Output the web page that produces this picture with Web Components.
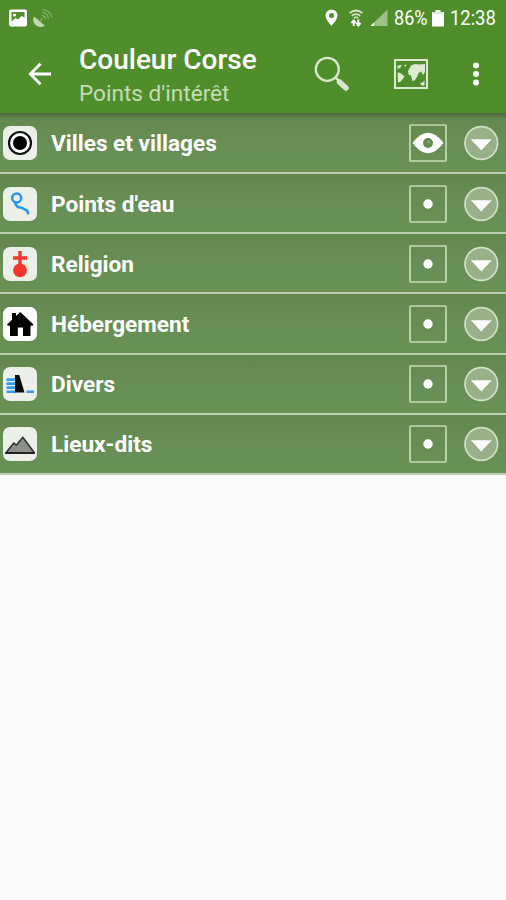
<!DOCTYPE html>
<html lang="fr">
<head>
<meta charset="utf-8">
<title>Couleur Corse</title>
<style>
    html, body {
        margin: 0;
        background: #fafafa;
    }
    body {
        width: 506px;
        height: 900px;
        overflow: hidden;
        font-family: Roboto, "Liberation Sans", sans-serif;
        color: #fff;
    }
</style>
</head>
<body>
<poi-screen>
    <status-bar slot="top" battery="86%" time="12:38"></status-bar>
    <app-bar slot="top">
        <span slot="title">Couleur Corse</span>
        <span slot="subtitle">Points d'intérêt</span>
    </app-bar>
    <poi-row icon="town" visible>Villes et villages</poi-row>
    <poi-row icon="water">Points d'eau</poi-row>
    <poi-row icon="religion">Religion</poi-row>
    <poi-row icon="house">Hébergement</poi-row>
    <poi-row icon="misc">Divers</poi-row>
    <poi-row icon="place">Lieux-dits</poi-row>
</poi-screen>

<script>
// 34x34 drawings, one for each category
const ICONS = {
    town: `
        <circle cx="17" cy="17" r="11" fill="#fff" stroke="#111" stroke-width="2.2"/>
        <circle cx="17" cy="17" r="7" fill="#000"/>`,
    water: `
        <circle cx="13.7" cy="11" r="4.5" fill="none" stroke="#2494ee" stroke-width="2.5"/>
        <path d="M12 15.5C12.500 18 14.500 20.500 17.500 20.500C20.500 20.500 20.500 22.500 23 23C24.800 23.500 25 24.800 25.300 27.300" fill="none" stroke="#2494ee" stroke-width="2.5"/>`,
    religion: `
        <path d="M15.3 4h3.4v5.2h5.3v3.5h-5.3v6h-3.4v-6h-5.3v-3.5h5.3z" fill="#f5382d"/>
        <circle cx="17" cy="23.3" r="6.9" fill="#f5382d"/>`,
    house: `
        <path d="M4 17.5L9 12.7V6h4v3l4.3-4L30.5 17.5L29.5 18.7H27.5V29H20V20.5H14.8V29H7V18.7H5z" fill="#000"/>`,
    misc: `
        <path d="M3.5 12.6h9M3.5 16.6h9M3.5 20.6h9M3.5 24.7h9M23.5 24.7h7.5" stroke="#329af0" stroke-width="2.6"/>
        <path d="M12 8h4.3L21.5 25.5H12z" fill="#0b0b08"/>`,
    place: `
        <path d="M3 25.8L10.8 16L13.4 18.2L19.8 10.3L31.3 25.8z" fill="#8d8f8b" stroke="#333" stroke-width="1.6" stroke-linejoin="round"/>
        <path d="M2.3 26h29.5" stroke="#222" stroke-width="1.8"/>`
};

class PoiScreen extends HTMLElement {
    constructor() {
        super();
        this.attachShadow({ mode: "open" });
        this.shadowRoot.innerHTML = `
            <style>
                :host {
                    display: flex;
                    flex-direction: column;
                    height: 900px;
                }
                header {
                    height: 113px;
                    flex: none;
                    background: #508e2c;
                }
                main {
                    display: flex;
                    flex-direction: column;
                }
                /* shadow of the header on the first row */
                main::before {
                    content: "";
                    height: 5px;
                    margin-bottom: -5px;
                    z-index: 1;
                    background: linear-gradient(rgba(50, 65, 45, .5), transparent);
                }
            </style>
            <header><slot name="top"></slot></header>
            <main><slot></slot></main>`;
    }
}

class StatusBar extends HTMLElement {
    constructor() {
        super();
        this.attachShadow({ mode: "open" });
        this.shadowRoot.innerHTML = `
            <style>
                :host {
                    display: flex;
                    align-items: center;
                    height: 36px;
                    box-sizing: border-box;
                    padding: 0 10px 1px 9px;
                    font-size: 21px;
                    line-height: 36px;
                }
                svg {
                    display: block;
                    flex: none;
                }
                .satellite { margin-left: 6px; }
                .pin { margin-left: auto; }
                .wifi { margin-left: 11px; }
                .signal { margin-left: 7px; }
                /* narrow digits */
                span {
                    display: block;
                    padding-top: 1px;
                    transform: scaleX(.875);
                    transform-origin: 0 50%;
                    white-space: nowrap;
                }
                .battery {
                    width: 34px;
                    margin-left: 6px;
                    transform: scaleX(.86);
                }
                .level { margin-left: 4px; }
                .time {
                    width: 46px;
                    margin-left: 6px;
                }
            </style>
            <svg width="18" height="18" viewBox="0 0 18 18">
                <rect y=".5" width="18" height="17" rx="2" fill="#fff"/>
                <path d="M2.5 3h13v5.5L12.5 7L9 10.5L6.5 9L2.5 12.5z" fill="#508e2c"/>
                <circle cx="5.5" cy="6" r="1.6" fill="#fff"/>
            </svg>
            <svg class="satellite" width="20" height="20" viewBox="0 0 20 20" fill="none" stroke="#a7c796" stroke-width="1.1">
                <path d="M1.3 9.5L11 17.5Q5.500 20 2.300 16Q0 13 1.300 9.500z" fill="#c2d9b5" stroke="#c2d9b5"/>
                <path d="M6.500 13.500L9.500 10M9 7.500q3 .5 3.500 3.500M9.500 4.500q5 .5 6 6M10 1.500q7 1 9 8" opacity=".75"/>
            </svg>
            <svg class="pin" width="13" height="18" viewBox="0 0 13 18">
                <path d="M6.500 .5a6 6 0 0 1 6 6C12.500 10 8.500 14.500 6.500 17C4.500 14.500 .5 10 .5 6.500a6 6 0 0 1 6-6z" fill="#fff"/>
                <circle cx="6.500" cy="6.500" r="2.500" fill="#508e2c"/>
            </svg>
            <svg class="wifi" width="14" height="18" viewBox="0 0 14 18" fill="none" stroke="#d5e5cb" stroke-width="1.700">
                <path d="M.7 4Q7-1 13.300 4M2.800 6.700Q7 3.500 11.200 6.700M5 9Q7 7.500 9 9"/>
                <path d="M4.700 17v-6M2.500 14l2.200-2.500l2 2.500M9.300 10.500v6M7.300 14l2 2.500l2.200-2.500" stroke="#fff" stroke-width="2"/>
            </svg>
            <svg class="signal" width="18" height="18" viewBox="0 0 18 18">
                <path d="M17.500 .5V17H.5z" fill="#9dc188"/>
                <path d="M4 13.500V17H.5z" fill="#fff"/>
            </svg>
            <span class="battery"></span>
            <svg class="level" width="12" height="18" viewBox="0 0 12 18">
                <path d="M3.500 1h5v2H12V17.500H0V3h3.500z" fill="#fff"/>
                <path d="M1 4h10" stroke="#b9d1a9"/>
            </svg>
            <span class="time"></span>`;
    }

    connectedCallback() {
        this.shadowRoot.querySelector(".battery").textContent = this.getAttribute("battery");
        this.shadowRoot.querySelector(".time").textContent = this.getAttribute("time");
    }
}

class AppBar extends HTMLElement {
    constructor() {
        super();
        this.attachShadow({ mode: "open" });
        this.shadowRoot.innerHTML = `
            <style>
                :host {
                    display: flex;
                    align-items: center;
                    height: 77px;
                    box-sizing: border-box;
                    padding: 0 27px 2px 28px;
                }
                svg {
                    display: block;
                    flex: none;
                }
                .titles {
                    flex: 1;
                    padding: 5px 0 0 27px;
                    white-space: nowrap;
                }
                .title {
                    font-size: 28px;
                    font-weight: 500;
                    line-height: 34px;
                }
                .subtitle {
                    font-size: 22.6px;
                    line-height: 33px;
                    color: #c4dbb5;
                }
                .map { margin-left: 44px; }
                .more { margin-left: 45px; }
            </style>
            <svg width="24" height="24" viewBox="0 0 24 24" fill="none" stroke="#fff" stroke-width="2.800">
                <path d="M23 12H3M12.500 1.800L2.300 12L12.500 22.200"/>
            </svg>
            <div class="titles">
                <div class="title"><slot name="title"></slot></div>
                <div class="subtitle"><slot name="subtitle"></slot></div>
            </div>
            <svg width="36" height="36" viewBox="0 0 36 36">
                <circle cx="13.300" cy="13.300" r="11.500" fill="none" stroke="#d9e8cf" stroke-width="2.300"/>
                <path d="M21.500 21.500l3 3" stroke="#d9e8cf" stroke-width="2.500"/>
                <path d="M25.500 26L32 32" stroke="#d9e8cf" stroke-width="5.500" stroke-linecap="round"/>
            </svg>
            <svg class="map" width="34" height="30" viewBox="0 0 34 30">
                <rect x="1" y="1" width="32" height="28" fill="none" stroke="#dceacf" stroke-width="2"/>
                <path d="M3.500 6.500l4.500-.5l-1.500 2.500l-3 1.500zM3.500 13.500l3 .5l4 3.500l-2 3l-2.500 2.500l-2 .5zM10 6l2.500-.5l-1 2.500zM14 12l1.500-2.500l1.500-3l4-1.500l4 .5l6-.5v8l-2 3l-2-3.500l-2.500 1.500l-1.500 4l-2.500 3.500l-2 .5l-1.500-5.500l-2.500-1zM26 24l2.500-.5l2-2v5h-3z" fill="#dceacf"/>
            </svg>
            <svg class="more" width="6" height="24" viewBox="0 0 6 24" fill="#fff">
                <circle cx="3" cy="3.500" r="3"/>
                <circle cx="3" cy="12" r="3"/>
                <circle cx="3" cy="20.500" r="3"/>
            </svg>`;
    }
}

class PoiRow extends HTMLElement {
    constructor() {
        super();
        this.attachShadow({ mode: "open" });
        this.shadowRoot.innerHTML = `
            <style>
                :host {
                    display: flex;
                    align-items: center;
                    box-sizing: border-box;
                    height: 60.2px;
                    padding: 1px 7px 0 3px;
                    border-bottom: 2px solid #bdcdb2;
                    background: linear-gradient(#63864f, #688f56 55%, #689154);
                }
                :host(:first-of-type) {
                    height: 61px;
                    padding-top: 0;
                }
                svg {
                    display: block;
                    flex: none;
                }
                .icon {
                    border-radius: 7px;
                    background: #eaf0e7;
                }
                :host([icon="house"]) .icon { background: #fff; }
                .label {
                    flex: 1;
                    padding: 2px 0 0 14px;
                    font-size: 22.6px;
                    font-weight: 700;
                    line-height: 30px;
                    white-space: nowrap;
                }
                .arrow { margin-left: 16px; }
            </style>
            <svg class="icon" width="34" height="34" viewBox="0 0 34 34"></svg>
            <div class="label"><slot></slot></div>
            <svg class="eye" width="38" height="38" viewBox="0 0 38 38"></svg>
            <svg class="arrow" width="36" height="36" viewBox="0 0 36 36">
                <circle cx="18.300" cy="18" r="16.300" fill="#97b087" stroke="#d0e0c5" stroke-width="1.700"/>
                <path d="M7.800 14.300h21L18.300 25.500z" fill="#fff"/>
            </svg>`;
    }

    connectedCallback() {
        this.shadowRoot.querySelector(".icon").innerHTML = ICONS[this.getAttribute("icon")];
        this._render();
    }

    // Open eye when the category is displayed, a dot when it is not
    _render() {
        const frame = `<rect x="1" y="1" width="36" height="36" rx=".8" fill="none" stroke="#c2dab4" stroke-width="1.700"/>`;
        let mark = `<circle cx="19" cy="19" r="4.700" fill="#fff"/>`;
        if (this.hasAttribute("visible")) {
            mark = `
                <path d="M3.500 19Q19-1.500 34.500 19Q19 39.500 3.500 19z" fill="#fff"/>
                <circle cx="19" cy="19" r="5" fill="#658c52"/>
                <circle cx="20" cy="18" r="1.200" fill="#8fab80"/>`;
        }
        this.shadowRoot.querySelector(".eye").innerHTML = frame + mark;
    }
}

customElements.define("poi-screen", PoiScreen);
customElements.define("status-bar", StatusBar);
customElements.define("app-bar", AppBar);
customElements.define("poi-row", PoiRow);
</script>
</body>
</html>
